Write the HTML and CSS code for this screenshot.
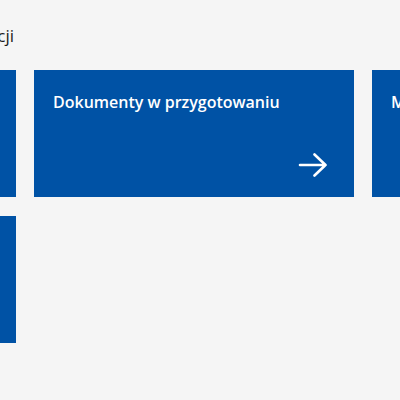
FILE: index.html
```
<!DOCTYPE html>
<html lang="pl">
<head>
    <meta charset="UTF-8">
    <meta name="viewport" content="width=device-width, initial-scale=1.0">
    <title>Dokumenty</title>
    <link rel="stylesheet" href="styles.css">
</head>
<body>
    <div class="main-body">
        <div class="section-head">
            <h2 class="section-title">Akcji</h2>
        </div>
        <div class="tile-grid">
            <a class="tile" href="#">
                <span class="tile-title">Moje dokumenty</span>
                <span class="tile-arrow"></span>
            </a>
            <a class="tile" href="#">
                <span class="tile-title">Dokumenty w przygotowaniu</span>
                <svg class="tile-arrow" width="30" height="24" viewBox="0 0 30 24">
                    <path d="M2 12 H27.5 M16.5 1.5 L27.5 12 L16.5 22.5" fill="none" stroke="#fff" stroke-width="2.6" stroke-linecap="round" stroke-linejoin="round"/>
                </svg>
            </a>
            <a class="tile" href="#">
                <span class="tile-title">Moje wnioski</span>
                <span class="tile-arrow"></span>
            </a>
            <a class="tile" href="#">
                <span class="tile-title">Korespondencja</span>
                <span class="tile-arrow"></span>
            </a>
        </div>
    </div>
</body>
</html>
```

FILE: styles.css
```
body {
    padding: 0;
    margin: 0;
    background-color: #f5f5f5;
    font-family: "Open Sans", "Noto Sans", sans-serif;
    overflow: hidden;
}
.main-body {
    width: 100%;
    height: 100vh;
    padding-top: 24px;
    box-sizing: border-box;
}
.section-head {
    width: 318px;
    margin-left: -304px;
    text-align: right;
}
.section-title {
    margin: 0;
    font-size: 17px;
    font-weight: 400;
    line-height: 24px;
    color: #1b1b1b;
}
.tile-grid {
    display: grid;
    grid-template-columns: repeat(3, 320px);
    gap: 19px 18px;
    margin-left: -304px;
    margin-top: 22px;
}
.tile {
    height: 127px;
    background-color: #0052a5;
    color: #fff;
    text-decoration: none;
    padding: 21px 26px 20px 19px;
    box-sizing: border-box;
    display: flex;
    flex-direction: column;
    justify-content: space-between;
}
.tile-title {
    font-size: 16px;
    font-weight: 600;
    line-height: 22px;
}
.tile-arrow {
    align-self: flex-end;
    width: 30px;
    height: 24px;
}
```
